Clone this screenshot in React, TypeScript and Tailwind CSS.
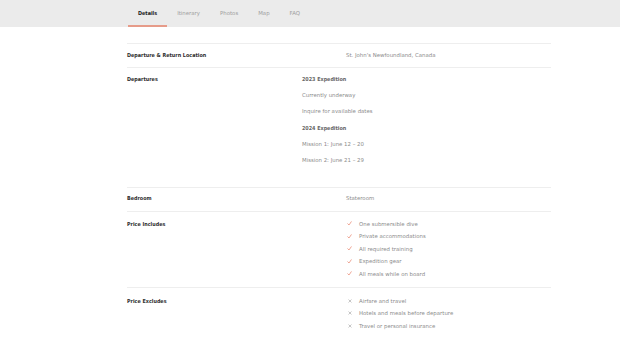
import React from "react";

const font = { fontFamily: '"DejaVu Sans", "Noto Sans", sans-serif' };
const boldFont = { fontFamily: '"DejaVu Sans Condensed", "DejaVu Sans", sans-serif' };

function Check() {
  return (
    <svg width="5" height="5" viewBox="0 0 10 10" className="shrink-0 ml-[1px]">
      <path d="M1.5 5.5 L4 8 L8.5 1.5" fill="none" stroke="#e8826c" strokeWidth="1.4" strokeLinecap="round" strokeLinejoin="round" />
    </svg>
  );
}

function Cross() {
  return (
    <svg width="4" height="4" viewBox="0 0 10 10" className="shrink-0 ml-[1px]">
      <path d="M2 2 L8 8 M8 2 L2 8" fill="none" stroke="#999" strokeWidth="1.4" strokeLinecap="round" />
    </svg>
  );
}

export default function App() {
  const tabs = ["Details", "Itinerary", "Photos", "Map", "FAQ"];
  return (
    <div className="w-[620px] h-[347px] bg-white overflow-hidden text-[5.4px] leading-[8px]" style={font}>
      <div className="h-[27px] bg-[#ebebeb] flex pl-[128px]">
        {tabs.map((t, i) => (
          <div
            key={t}
            style={i === 0 ? boldFont : undefined}
            className={
              "px-[10px] flex items-center border-b-[2px] " +
              (i === 0 ? "border-[#e69b89] text-[#222] font-semibold" : "border-transparent text-[#a0a0a0]")
            }
          >
            {t}
          </div>
        ))}
      </div>

      <div className="ml-[127px] w-[424px] mt-[16px]">
        <div className="flex border-t border-[#eeeeee] pt-[7px] pb-[8px]">
          <div className="w-[219px] font-semibold text-[#2e2e2e]" style={boldFont}>Departure &amp; Return Location</div>
          <div className="text-[#8c8c8c]">St. John's Newfoundland, Canada</div>
        </div>

        <div className="flex border-t border-[#eeeeee] pt-[7px] pb-[23px]">
          <div className="w-[175px] font-semibold text-[#2e2e2e]" style={boldFont}>Departures</div>
          <div className="flex flex-col gap-[8.2px]">
            <div className="font-semibold text-[#666]" style={boldFont}>2023 Expedition</div>
            <div className="text-[#8c8c8c]">Currently underway</div>
            <div className="text-[#8c8c8c]">Inquire for available dates</div>
            <div className="font-semibold text-[#666]" style={boldFont}>2024 Expedition</div>
            <div className="text-[#8c8c8c]">Mission 1: June 12 – 20</div>
            <div className="text-[#8c8c8c]">Mission 2: June 21 – 29</div>
          </div>
        </div>

        <div className="flex border-t border-[#eeeeee] pt-[6px] pb-[9px]">
          <div className="w-[219px] font-semibold text-[#2e2e2e]" style={boldFont}>Bedroom</div>
          <div className="text-[#8c8c8c]">Stateroom</div>
        </div>

        <div className="flex border-t border-[#eeeeee] pt-[8px] pb-[9px]">
          <div className="w-[219px] font-semibold text-[#2e2e2e]" style={boldFont}>Price Includes</div>
          <div className="flex flex-col gap-[4.5px]">
            {["One submersible dive", "Private accommodations", "All required training", "Expedition gear", "All meals while on board"].map((s) => (
              <div key={s} className="flex items-center gap-[7px] text-[#8c8c8c]">
                <Check />
                <span>{s}</span>
              </div>
            ))}
          </div>
        </div>

        <div className="flex border-t border-[#eeeeee] pt-[9px] pb-[9px]">
          <div className="w-[219px] font-semibold text-[#2e2e2e]" style={boldFont}>Price Excludes</div>
          <div className="flex flex-col gap-[4.5px] pl-[1px]">
            {["Airfare and travel", "Hotels and meals before departure", "Travel or personal insurance"].map((s) => (
              <div key={s} className="flex items-center gap-[7px] text-[#8c8c8c]">
                <Cross />
                <span>{s}</span>
              </div>
            ))}
          </div>
        </div>
      </div>
    </div>
  );
}
